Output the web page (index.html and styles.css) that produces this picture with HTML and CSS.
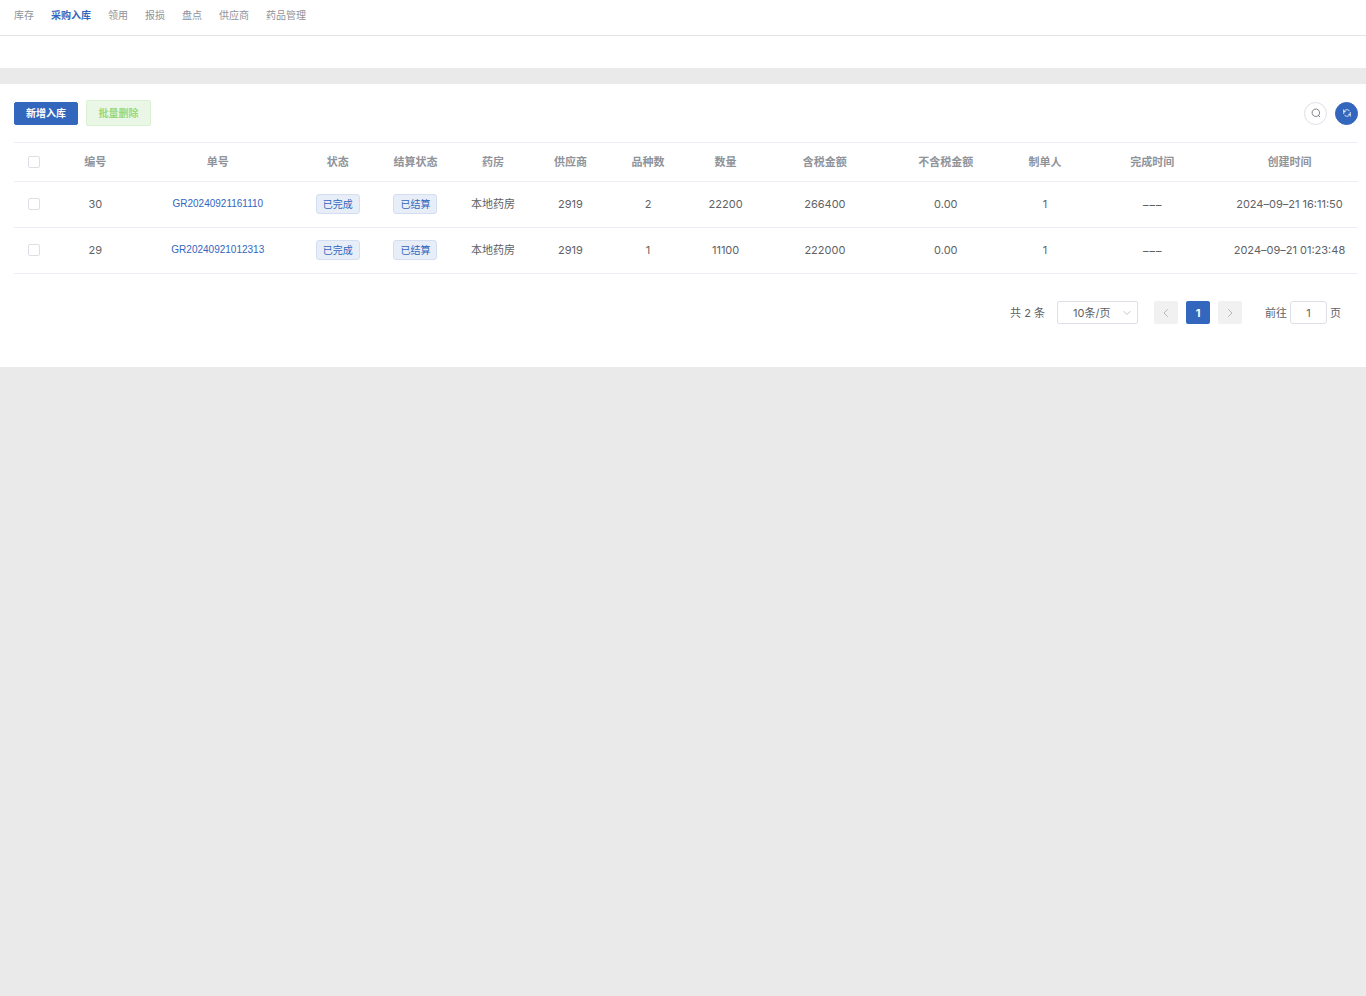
FILE: index.html
```html
<!DOCTYPE html>
<html lang="zh-CN">
<head>
<meta charset="utf-8">
<title>采购入库</title>
<link rel="stylesheet" href="styles.css">
</head>
<body>
<nav class="tabs">
  <a href="#">库存</a>
  <a href="#" class="active">采购入库</a>
  <a href="#">领用</a>
  <a href="#">报损</a>
  <a href="#">盘点</a>
  <a href="#">供应商</a>
  <a href="#">药品管理</a>
</nav>
<div class="filter"></div>
<main class="panel">
  <div class="toolbar">
    <button class="btn primary" type="button">新增入库</button>
    <button class="btn danger" type="button" disabled>批量删除</button>
    <div class="tools">
      <button class="round" type="button" aria-label="搜索">
        <svg viewBox="0 0 10 10" width="10" height="10"><path d="M6.9 8A3.8 3.8 0 1 1 8.1 6.8M7.2 7.2L8.8 8.8"/></svg>
      </button>
      <button class="round filled" type="button" aria-label="刷新">
        <svg viewBox="0 0 10 10" width="10" height="10"><path d="M1.6 1.9v1.8h1.8M1.7 5.6V5A3.3 3.3 0 0 1 7.2 2.5M8.4 8.1V6.3H6.6M8.3 4.4V5A3.3 3.3 0 0 1 2.8 7.5"/></svg>
      </button>
    </div>
  </div>
  <table class="grid">
    <colgroup>
      <col class="w-check"><col class="w-id"><col class="w-no"><col class="w-s"><col class="w-s"><col class="w-s"><col class="w-s"><col class="w-s"><col class="w-s"><col class="w-m"><col class="w-m"><col class="w-s"><col class="w-l"><col class="w-l">
    </colgroup>
    <thead>
      <tr>
        <th><input type="checkbox" aria-label="全选"></th>
        <th>编号</th><th>单号</th><th>状态</th><th>结算状态</th><th>药房</th><th>供应商</th><th>品种数</th><th>数量</th><th>含税金额</th><th>不含税金额</th><th>制单人</th><th>完成时间</th><th>创建时间</th>
      </tr>
    </thead>
    <tbody>
      <tr>
        <td><input type="checkbox" aria-label="选择 30"></td>
        <td>30</td><td><a href="#">GR20240921161110</a></td><td><span class="tag">已完成</span></td><td><span class="tag">已结算</span></td><td>本地药房</td><td>2919</td><td>2</td><td>22200</td><td>266400</td><td>0.00</td><td>1</td><td class="empty">–––</td><td>2024–09–21 16:11:50</td>
      </tr>
      <tr>
        <td><input type="checkbox" aria-label="选择 29"></td>
        <td>29</td><td><a href="#">GR20240921012313</a></td><td><span class="tag">已完成</span></td><td><span class="tag">已结算</span></td><td>本地药房</td><td>2919</td><td>1</td><td>11100</td><td>222000</td><td>0.00</td><td>1</td><td class="empty">–––</td><td>2024–09–21 01:23:48</td>
      </tr>
    </tbody>
  </table>
  <div class="pager">
    <span class="total">共 2 条</span>
    <span class="size">
      <select aria-label="每页条数"><option>10条/页</option></select>
      <svg class="caret" viewBox="0 0 8 8" width="8" height="8"><path d="M1 2.5l3 3 3-3"/></svg>
    </span>
    <div class="pages">
      <button type="button" disabled aria-label="上一页"><svg viewBox="0 0 10 10" width="10" height="10"><path d="M6.5 1.5L3 5l3.5 3.5"/></svg></button>
      <button type="button" class="current">1</button>
      <button type="button" disabled aria-label="下一页"><svg viewBox="0 0 10 10" width="10" height="10"><path d="M3.5 1.5L7 5 3.5 8.5"/></svg></button>
    </div>
    <label class="jump">前往<input type="text" value="1">页</label>
  </div>
</main>
</body>
</html>
```
FILE: styles.css
```css
* {
  box-sizing: border-box;
}

body {
  margin: 0;
  background: #eaeaea;
  color: #606266;
  font: 11px/16px Inter, "Noto Sans CJK SC", sans-serif;
}

button, input, select {
  margin: 0;
  font: inherit;
  color: inherit;
}

a {
  color: #3366bd;
  text-decoration: none;
}

svg {
  display: block;
  fill: none;
  stroke: currentColor;
  stroke-linecap: round;
  stroke-linejoin: round;
}

.tabs {
  display: flex;
  gap: 17px;
  padding: 7px 14px 12px;
  background: #fff;
  border-bottom: 1px solid #e4e4e4;
  font-size: 10px;
}

.tabs a {
  color: #909399;
}

.tabs .active {
  color: #3366bd;
  font-weight: 700;
}

.filter {
  height: 32px;
  background: #fff;
}

.panel {
  margin-top: 16px;
  padding: 16px 8px 43px 14px;
  background: #fff;
}

.toolbar {
  display: flex;
  align-items: center;
  gap: 8px;
  margin-bottom: 16px;
}

.btn {
  width: 64px;
  height: 23px;
  padding: 0;
  border: 1px solid #3366bd;
  border-radius: 2px;
  background: #3366bd;
  color: #fff;
  font-size: 10px;
  font-weight: 700;
}

.btn.danger {
  width: 65px;
  height: 26px;
  border-color: #d9f1cf;
  background: #ebf7e6;
  color: #98d87c;
}

.tools {
  display: flex;
  gap: 8px;
  margin-left: auto;
}

.round {
  display: grid;
  place-items: center;
  width: 23px;
  height: 23px;
  padding: 0;
  border: 1px solid #dcdfe6;
  border-radius: 50%;
  background: #fff;
}

.round.filled {
  border-color: #3366bd;
  background: #3366bd;
  color: #fff;
}

.round svg {
  stroke-width: 0.8;
}

.grid {
  width: 100%;
  table-layout: fixed;
  border-collapse: collapse;
  border-top: 1px solid #ebeef5;
  text-align: center;
}

.grid tr {
  border-bottom: 1px solid #ebeef5;
}

.grid th, .grid td {
  padding: 0;
  white-space: nowrap;
}

.grid th {
  height: 39px;
  padding-bottom: 1px;
  color: #909399;
  font-weight: 700;
}

.grid td {
  height: 46px;
  padding-bottom: 2px;
}

.grid td a {
  font-family: "Liberation Sans", sans-serif;
  font-size: 10px;
}

.grid .empty {
  font-family: "Noto Sans", sans-serif;
  font-size: 13px;
}

.w-check { width: 40px; }
.w-id { width: 82px; }
.w-no { width: 162px; }
.w-s { width: 5.77%; }
.w-m { width: 9%; }
.w-l { width: 10.2%; }

.grid input {
  display: block;
  width: 12px;
  height: 12px;
  margin: 0 auto;
  appearance: none;
  border: 1px solid #dcdfe6;
  border-radius: 2px;
  background: #fff;
}

.tag {
  display: inline-block;
  padding: 0 6px;
  border: 1px solid #d3dff1;
  border-radius: 3px;
  background: #e7eef8;
  color: #3366bd;
  font-size: 10px;
  line-height: 18px;
}

.pager {
  display: flex;
  justify-content: flex-end;
  align-items: center;
  margin-top: 27px;
  padding-right: 17px;
}

.size {
  position: relative;
  margin: 0 16px 0 12px;
}

.size select {
  display: block;
  width: 81px;
  height: 23px;
  padding: 0 15px;
  appearance: none;
  border: 1px solid #dcdfe6;
  border-radius: 2px;
  background: #fff;
}

.caret {
  position: absolute;
  top: 8px;
  right: 7px;
  color: #c0c4cc;
  pointer-events: none;
}

.pages {
  display: flex;
  gap: 8px;
}

.pages button {
  display: grid;
  place-items: center;
  width: 24px;
  height: 23px;
  padding: 0;
  border: 0;
  border-radius: 2px;
  background: #f1f1f2;
  color: #b4b8c0;
}

.pages .current {
  background: #3366bd;
  color: #fff;
  font-weight: 700;
}

.jump {
  display: flex;
  align-items: center;
  gap: 3px;
  margin-left: 23px;
}

.jump input {
  width: 37px;
  height: 23px;
  padding: 0;
  border: 1px solid #dcdfe6;
  border-radius: 3px;
  text-align: center;
}
```
